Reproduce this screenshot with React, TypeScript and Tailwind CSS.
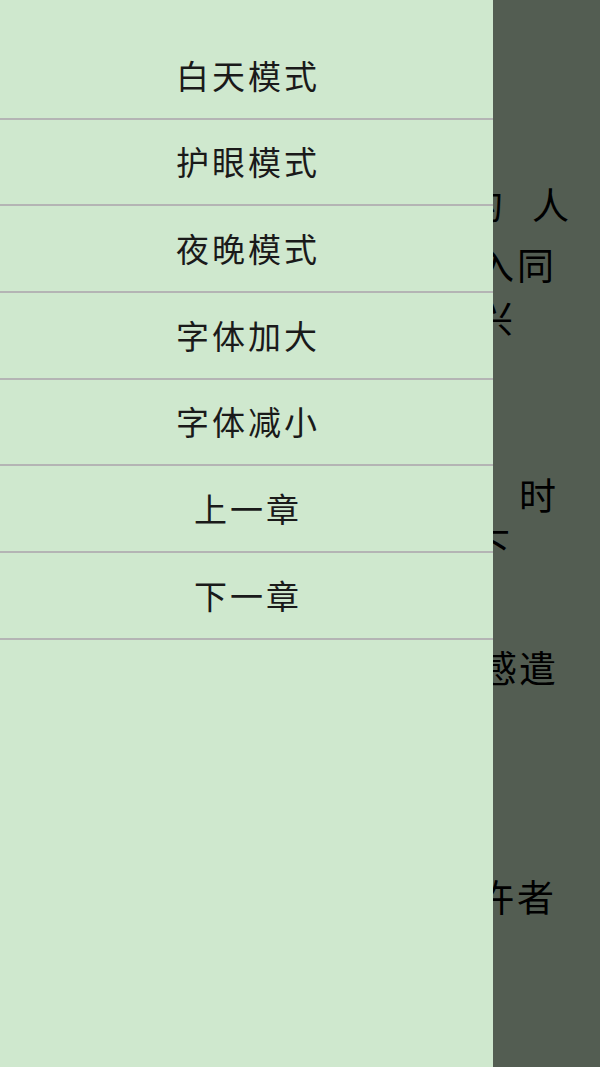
const menu = ["白天模式", "护眼模式", "夜晚模式", "字体加大", "字体减小", "上一章", "下一章"];

export default function App() {
  return (
    <div className="relative h-[1067px] w-[600px] overflow-hidden bg-[#cfe8ce] font-['Noto_Sans_CJK_SC',sans-serif] text-black">
      {/* reading page underneath */}
      <div className="flex flex-col pt-[186px] text-[37px] leading-none">
        <div className="flex h-[38px] justify-end gap-[29px] pr-[31px]">
          <span>的</span>
          <span>人</span>
        </div>
        <div className="mt-[22px] flex h-[38px] justify-end gap-[3px] pr-[46px]">
          <span>入</span>
          <span>同</span>
        </div>
        <div className="mt-[15px] flex h-[38px] justify-end pr-[87px]">
          <span>兴</span>
        </div>
        <div className="mt-[139px] flex h-[38px] justify-end pr-[44px]">
          <span>时</span>
        </div>
        <div className="mt-[12px] flex h-[38px] justify-end pr-[90px]">
          <span>下</span>
        </div>
        <div className="mt-[85px] flex h-[38px] justify-end gap-[2px] pr-[44px]">
          <span>感</span>
          <span>遣</span>
        </div>
        <div className="mt-[191px] flex h-[38px] justify-end gap-[3px] pr-[46px]">
          <span>许</span>
          <span>者</span>
        </div>
      </div>

      {/* scrim */}
      <div className="absolute inset-0 bg-black/60" />

      {/* drawer */}
      <div className="absolute bottom-0 left-0 top-0 w-[493px] bg-[#cfe8ce] pt-[33px]">
        {menu.map((m) => (
          <div
            key={m}
            className="flex h-[86.67px] items-center justify-center border-b-2 border-[#b4b4b4] pl-[3px] text-[33px] tracking-[3px] text-[#1a1a1a]"
          >
            {m}
          </div>
        ))}
      </div>
    </div>
  );
}
